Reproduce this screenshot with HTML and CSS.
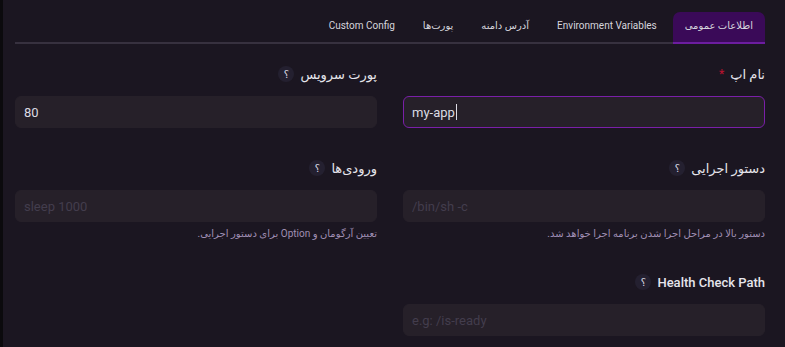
FILE: index.html
```html
<!DOCTYPE html>
<html lang="fa" dir="rtl">
<head>
<meta charset="utf-8">
<title>App Settings</title>
<link rel="stylesheet" href="styles.css">
</head>
<body>
<div class="page">
  <nav class="tabs">
    <div class="tab active">اطلاعات عمومی</div>
    <div class="tab">Environment Variables</div>
    <div class="tab">آدرس دامنه</div>
    <div class="tab">پورت‌ها</div>
    <div class="tab">Custom Config</div>
  </nav>
  <div class="form">
    <div class="field">
      <div class="label"><span>نام اپ</span><span class="req">*</span></div>
      <div class="input focused" dir="ltr"><span class="value">my-app</span><span class="caret"></span></div>
    </div>
    <div class="field">
      <div class="label"><span>پورت سرویس</span><span class="help">؟</span></div>
      <input class="input" dir="ltr" type="text" value="80">
    </div>
    <div class="field">
      <div class="label"><span>دستور اجرایی</span><span class="help">؟</span></div>
      <input class="input" dir="ltr" type="text" placeholder="/bin/sh -c">
      <div class="hint">دستور بالا در مراحل اجرا شدن برنامه اجرا خواهد شد.</div>
    </div>
    <div class="field">
      <div class="label"><span>ورودی‌ها</span><span class="help">؟</span></div>
      <input class="input" dir="ltr" type="text" placeholder="sleep 1000">
      <div class="hint">تعیین آرگومان و Option برای دستور اجرایی.</div>
    </div>
    <div class="field">
      <div class="label"><span>Health Check Path</span><span class="help">؟</span></div>
      <input class="input" dir="ltr" type="text" placeholder="e.g: /is-ready">
    </div>
  </div>
</div>
</body>
</html>
```
FILE: styles.css
```css
* { box-sizing: border-box; }
html, body { margin: 0; height: 100%; }
body {
  background: #0b0a0d;
  font-family: Roboto, "DejaVu Sans", sans-serif;
  color: #e4e3ea;
  overflow: hidden;
}
.page {
  margin-left: 3px;
  min-height: 100%;
  background: #1b1621;
  padding: 12px 20px 0 12px;
}
.tabs {
  display: flex;
  gap: 4px;
  border-bottom: 2px solid #37313f;
  height: 32px;
}
.tab {
  height: 30px;
  padding: 0 12px 3px;
  display: flex;
  align-items: center;
  font-size: 10px;
  color: #d6d5dd;
  border-radius: 7px 7px 0 0;
}
.tab.active {
  background: #3a0a58;
  border-bottom: 2px solid #6c1d9f;
  height: 32px;
  margin-bottom: -2px;
}
.form {
  display: grid;
  grid-template-columns: 1fr 1fr;
  column-gap: 26px;
  row-gap: 30px;
  padding-top: 20px;
}
.field { display: flex; flex-direction: column; }
.label {
  display: flex;
  align-items: center;
  gap: 6px;
  height: 20px;
  font-size: 13px;
  font-weight: 500;
  color: #e6e5ec;
  margin-bottom: 12px;
}
.req { color: #b3122e; font-size: 12px; }
.help {
  width: 16px;
  height: 16px;
  border-radius: 50%;
  background: #242030;
  color: #dcdbe4;
  font-size: 10px;
  display: flex;
  align-items: center;
  justify-content: center;
}
.input {
  height: 32px;
  width: 100%;
  border: 1px solid #262029;
  background: #262029;
  border-radius: 6px;
  padding: 0 8px;
  font-family: Roboto, "DejaVu Sans", sans-serif;
  font-size: 13px;
  color: #dcdbe3;
  outline: none;
  text-align: left;
  display: flex;
  align-items: center;
}
.input::placeholder { color: #433d4d; }
.input.focused { border-color: #7a1fa8; }
.caret {
  display: inline-block;
  width: 1px;
  height: 16px;
  background: #dcdbe3;
  margin-left: 1px;
}
.hint {
  margin-top: 4px;
  font-size: 10px;
  line-height: 16px;
  color: #a08fb4;
}
```
